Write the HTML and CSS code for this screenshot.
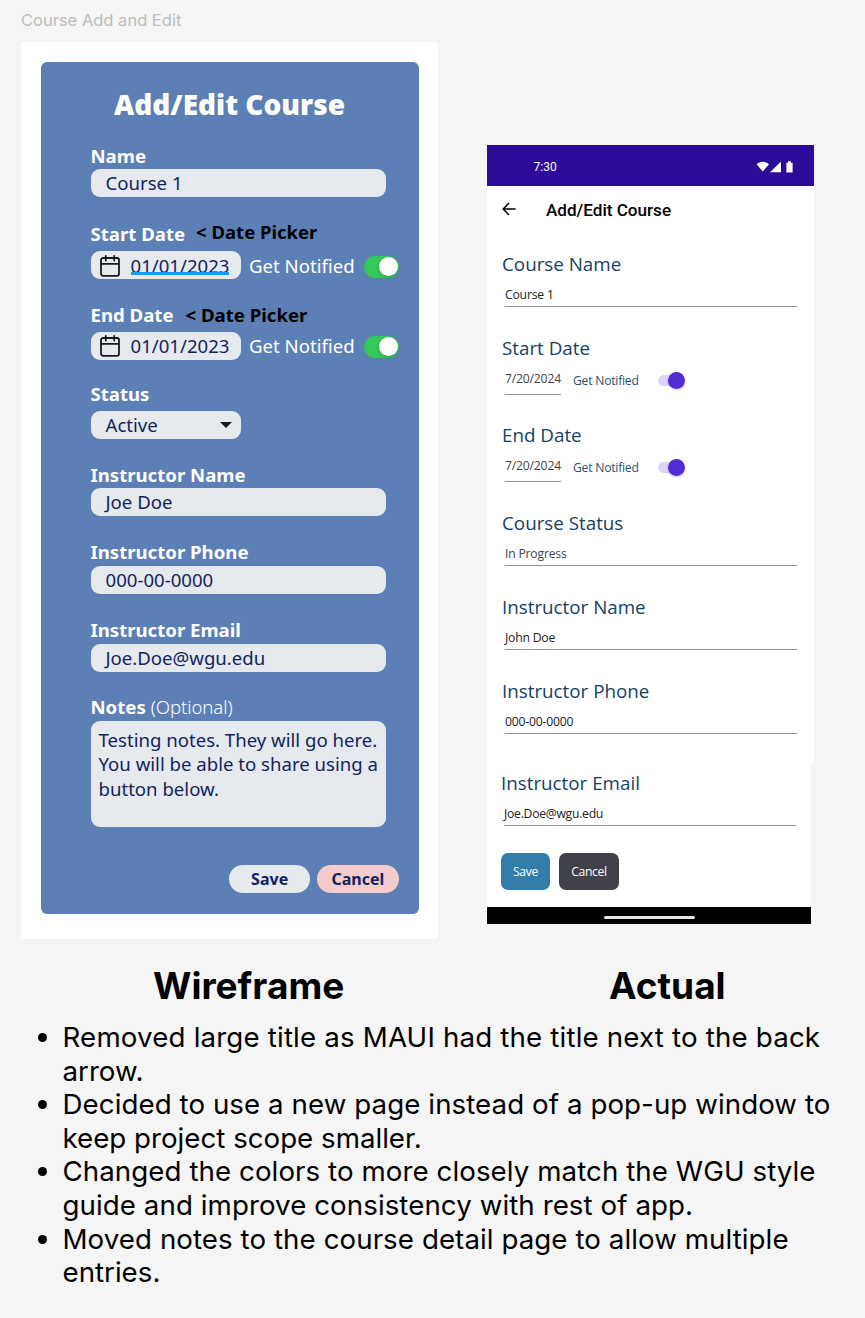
FILE: index.html
```html
<!DOCTYPE html>
<html lang="en">
<head>
<meta charset="utf-8">
<title>Course Add and Edit</title>
<link rel="stylesheet" href="styles.css">
</head>
<body>
<main class="board">
  <div class="frame-name"><span>Course Add and Edit</span></div>
  <div class="columns">
    <section class="frame">
      <div class="wire">
        <h1 class="wire-title"><span>Add/Edit Course</span></h1>
        <div class="field"><div class="label"><span>Name</span></div><div class="box"><span>Course 1</span></div></div>
        <div class="field start">
          <div class="label"><span>Start Date</span><span class="hint raised">&lt; Date Picker</span></div>
          <div class="row">
            <div class="box short date">
              <svg class="cal" viewBox="0 0 20 22" fill="none" stroke="#1b1b1f" stroke-width="1.8"><rect x="1" y="3" width="18" height="17.8" rx="2"/><path d="M1 8.8h18M5.8 1v4.5M14.2 1v4.5" stroke-linecap="round"/></svg>
              <span class="marked">01/01/2023</span>
            </div>
            <span class="notify">Get Notified</span><i class="toggle"></i>
          </div>
        </div>
        <div class="field end">
          <div class="label"><span>End Date</span><span class="hint">&lt; Date Picker</span></div>
          <div class="row">
            <div class="box short date">
              <svg class="cal" viewBox="0 0 20 22" fill="none" stroke="#1b1b1f" stroke-width="1.8"><rect x="1" y="3" width="18" height="17.8" rx="2"/><path d="M1 8.8h18M5.8 1v4.5M14.2 1v4.5" stroke-linecap="round"/></svg>
              <span>01/01/2023</span>
            </div>
            <span class="notify">Get Notified</span><i class="toggle"></i>
          </div>
        </div>
        <div class="field status">
          <div class="label"><span>Status</span></div>
          <div class="box short select"><span>Active</span><svg class="caret" viewBox="0 0 12 6"><path d="M0 0h12L6 6z" fill="#1b1b1f"/></svg></div>
        </div>
        <div class="field iname"><div class="label"><span>Instructor Name</span></div><div class="box"><span>Joe Doe</span></div></div>
        <div class="field later"><div class="label"><span>Instructor Phone</span></div><div class="box"><span>000-00-0000</span></div></div>
        <div class="field later"><div class="label"><span>Instructor Email</span></div><div class="box"><span>Joe.Doe@wgu.edu</span></div></div>
        <div class="field memo">
          <div class="label"><span>Notes</span><span class="optional">(Optional)</span></div>
          <div class="notes">Testing notes. They will go here.<br>You will be able to share using a<br>button below.</div>
        </div>
        <div class="actions"><div class="pill">Save</div><div class="pill cancel">Cancel</div></div>
      </div>
    </section>
    <section class="phone">
      <div class="upper">
        <div class="statusbar">
          <span>7:30</span>
          <svg class="signals" viewBox="0 0 38 12" fill="#fff"><path d="M0.6 3.2C4-.2 9.6-.2 13 3.2L6.8 10.6zM14 11.2h11V.6zM30.4 1.8h1.6V.3h2.8v1.5h1.8v9.6h-6.2z"/></svg>
        </div>
        <div class="appbar">
          <svg class="back" viewBox="0 0 14 14" fill="none" stroke="#000" stroke-width="1.5"><path d="M13.6 7H1.4M7 1L1.2 7L7 13"/></svg>
          <span>Add/Edit Course</span>
        </div>
        <div class="entry"><div class="caption">Course Name</div><div class="value"><span>Course 1</span></div></div>
        <div class="entry day"><div class="caption">Start Date</div><div class="dates"><div class="value pick"><span>7/20/2024</span></div><span class="alert">Get Notified</span><i class="switch"></i></div></div>
        <div class="entry day-end"><div class="caption">End Date</div><div class="dates"><div class="value pick"><span>7/20/2024</span></div><span class="alert">Get Notified</span><i class="switch"></i></div></div>
        <div class="entry"><div class="caption">Course Status</div><div class="value soft"><span>In Progress</span></div></div>
        <div class="entry"><div class="caption">Instructor Name</div><div class="value"><span>John Doe</span></div></div>
        <div class="entry"><div class="caption">Instructor Phone</div><div class="value"><span>000-00-0000</span></div></div>
      </div>
      <div class="lower">
        <div class="entry"><div class="caption">Instructor Email</div><div class="value"><span>Joe.Doe@wgu.edu</span></div></div>
        <div class="buttons"><div class="btn">Save</div><div class="btn dark">Cancel</div></div>
        <div class="navbar"><i></i></div>
      </div>
    </section>
  </div>
  <div class="headings"><h2>Wireframe</h2><h2>Actual</h2></div>
  <ul class="points">
    <li><span class="wider">Removed large title as MAUI had the title next to the back</span><br>arrow.</li>
    <li><span class="wide">Decided to use a new page instead of a pop-up window to</span><br>keep project scope smaller.</li>
    <li class="wide">Changed the colors to more closely match the WGU style<br>guide and improve consistency with rest of app.</li>
    <li><span class="wide">Moved notes to the course detail page to allow multiple</span><br>entries.</li>
  </ul>
</main>
</body>
</html>
```
FILE: styles.css
```css
* { box-sizing: border-box; }
body { margin: 0; background: #f5f5f5; color: #000; font-family: Inter, sans-serif; }
i { display: block; }
svg { display: block; flex: none; }
.board { width: 865px; height: 1318px; overflow: hidden; white-space: nowrap; }
.frame-name { height: 42px; padding: 10px 0 0 21px; font-size: 16.5px; line-height: 20px; color: #bdbdbd; }
.columns { display: flex; gap: 49px; padding-left: 21px; height: 897px; }

.frame { width: 417px; background: #fff; padding: 19.5px 19.5px 25.5px; }
.wire { height: 852px; border-radius: 6px; background: #5c80b5; padding: 22.5px 0 0 50px; color: #fff; font-family: "Noto Sans", sans-serif; font-size: 18.6px; }
.wire-title { margin: 0 0 20px -50px; width: 378px; text-align: center; font-family: "Open Sans", sans-serif; font-size: 28px; line-height: 40px; font-weight: 800; }
.label { display: flex; height: 25px; line-height: 24px; font-weight: 700; }
.hint { color: #000; margin-left: 12px; }
.raised { margin: -2px 0 0 11px; font-size: 18.5px; }
.optional { font-weight: 300; margin-left: 5px; letter-spacing: -.1px; }
.box { width: 295.5px; height: 28px; border-radius: 9px; background: #e6e9ee; color: #12245e; padding-left: 15px; line-height: 28px; }
.short { width: 150.5px; }
.row { display: flex; }
.start { margin-top: 25px; }
.start .label { height: 29px; }
.start .row { height: 28px; }
.start .notify { line-height: 30px; }
.start .date { padding-top: 2px; }
.end { margin-top: 24px; }
.end .label { height: 29px; }
.end .toggle { margin-top: 4px; }
.status { margin-top: 22px; }
.status .label { height: 29px; }
.iname { margin-top: 24px; }
.later { margin-top: 24px; }
.later .label { height: 26px; }
.memo { margin-top: 23px; }
.memo .label { height: 26px; }
.date { display: flex; align-items: center; padding-left: 9.5px; gap: 10.5px; }
.cal { width: 20px; height: 22px; }
.marked { position: relative; }
.marked::after { content: ""; position: absolute; left: 0; right: 0; bottom: 5px; height: 3px; background: #189bff; }
.notify { margin-left: 8px; width: 114.5px; line-height: 28px; }
.toggle { width: 35px; height: 21.5px; margin-top: 5px; border-radius: 11px; background: #34c759; padding: 1px 1px 0 15px; }
.toggle::after { content: ""; display: block; width: 19px; height: 19px; border-radius: 50%; background: #fff; box-shadow: 0 1px 3px #0003; }
.select { display: flex; align-items: center; justify-content: space-between; padding-right: 9px; }
.caret { width: 12px; height: 6px; }
.notes { width: 295.5px; height: 105.5px; border-radius: 9px; background: #e6e9ee; color: #12245e; padding: 7px 0 0 8px; line-height: 24.3px; font-size: 18.6px; }
.actions { display: flex; gap: 7px; margin: 38px 0 0 138.5px; }
.pill { width: 81.3px; height: 28px; border-radius: 14px; background: #e6e9ee; color: #12245e; text-align: center; line-height: 28px; font-size: 16px; font-weight: 700; }
.cancel { background: #f4cccc; }

.phone { width: 327px; padding-top: 102.5px; font-family: "Open Sans", sans-serif; }
.upper { height: 617.5px; background: #fff; }
.statusbar { display: flex; justify-content: space-between; align-items: center; height: 41.5px; padding: 3px 20px 0 46.5px; background: #2b0b98; color: #fff; font: 12px Roboto, sans-serif; }
.signals { width: 38px; height: 12px; }
.appbar { display: flex; align-items: center; height: 48px; gap: 30px; padding-left: 15px; font: 500 17.1px Roboto, sans-serif; margin-bottom: 16px; }
.back { width: 14px; height: 14px; margin-top: -2px; }
.entry { height: 84px; padding-left: 15px; }
.day { height: 87px; }
.day-end { height: 88px; }
.caption { height: 30px; line-height: 28px; font-size: 18.8px; color: #153f65; }
.value { width: 291.5px; height: 27px; margin-left: 3px; padding-top: 5px; border-bottom: 1px solid #929292; font-size: 12.2px; line-height: 20px; letter-spacing: -.2px; color: #222; }
.soft { color: #444; }
.dates { display: flex; }
.pick { width: 56px; height: 30.5px; color: #444; }
.alert { width: 85px; margin: 7px 0 0 12px; font-size: 12.2px; line-height: 20px; letter-spacing: -.25px; color: #2b506e; }
.switch { position: relative; width: 27px; height: 17px; margin-top: 8px; }
.switch::before { content: ""; position: absolute; left: 0; top: 3px; width: 24px; height: 11px; border-radius: 6px; background: #dcd5f5; }
.switch::after { content: ""; position: absolute; right: 0; top: 0; width: 17px; height: 17px; border-radius: 50%; background: #512bd4; box-shadow: 0 1px 2px #512bd455; }
.lower { width: 324px; background: #fff; padding-top: 7px; }
.lower .entry { padding-left: 14px; }
.lower .value { letter-spacing: -.27px; }
.buttons { display: flex; gap: 9px; padding-left: 14px; height: 54px; }
.btn { width: 49px; height: 37px; border-radius: 7px; background: #337dab; color: #fff; text-align: center; line-height: 37px; font-size: 12.2px; font-weight: 500; letter-spacing: -.35px; }
.dark { width: 60px; background: #414149; }
.navbar { height: 16.5px; background: #000; padding: 8.5px 0 0 117px; }
.navbar i { width: 91px; height: 3px; border-radius: 2px; background: #e8e8e8; }

.headings { display: flex; height: 82px; padding: 24px 0 0 153px; }
h2 { flex: none; margin: 0; width: 456px; font-size: 37px; line-height: 46px; font-weight: 700; }
.points { margin: 0; padding: 0 0 0 62.5px; font-size: 27.7px; line-height: 33.6px; }
.wide { letter-spacing: .07px; }
.wider { letter-spacing: .17px; }
```
